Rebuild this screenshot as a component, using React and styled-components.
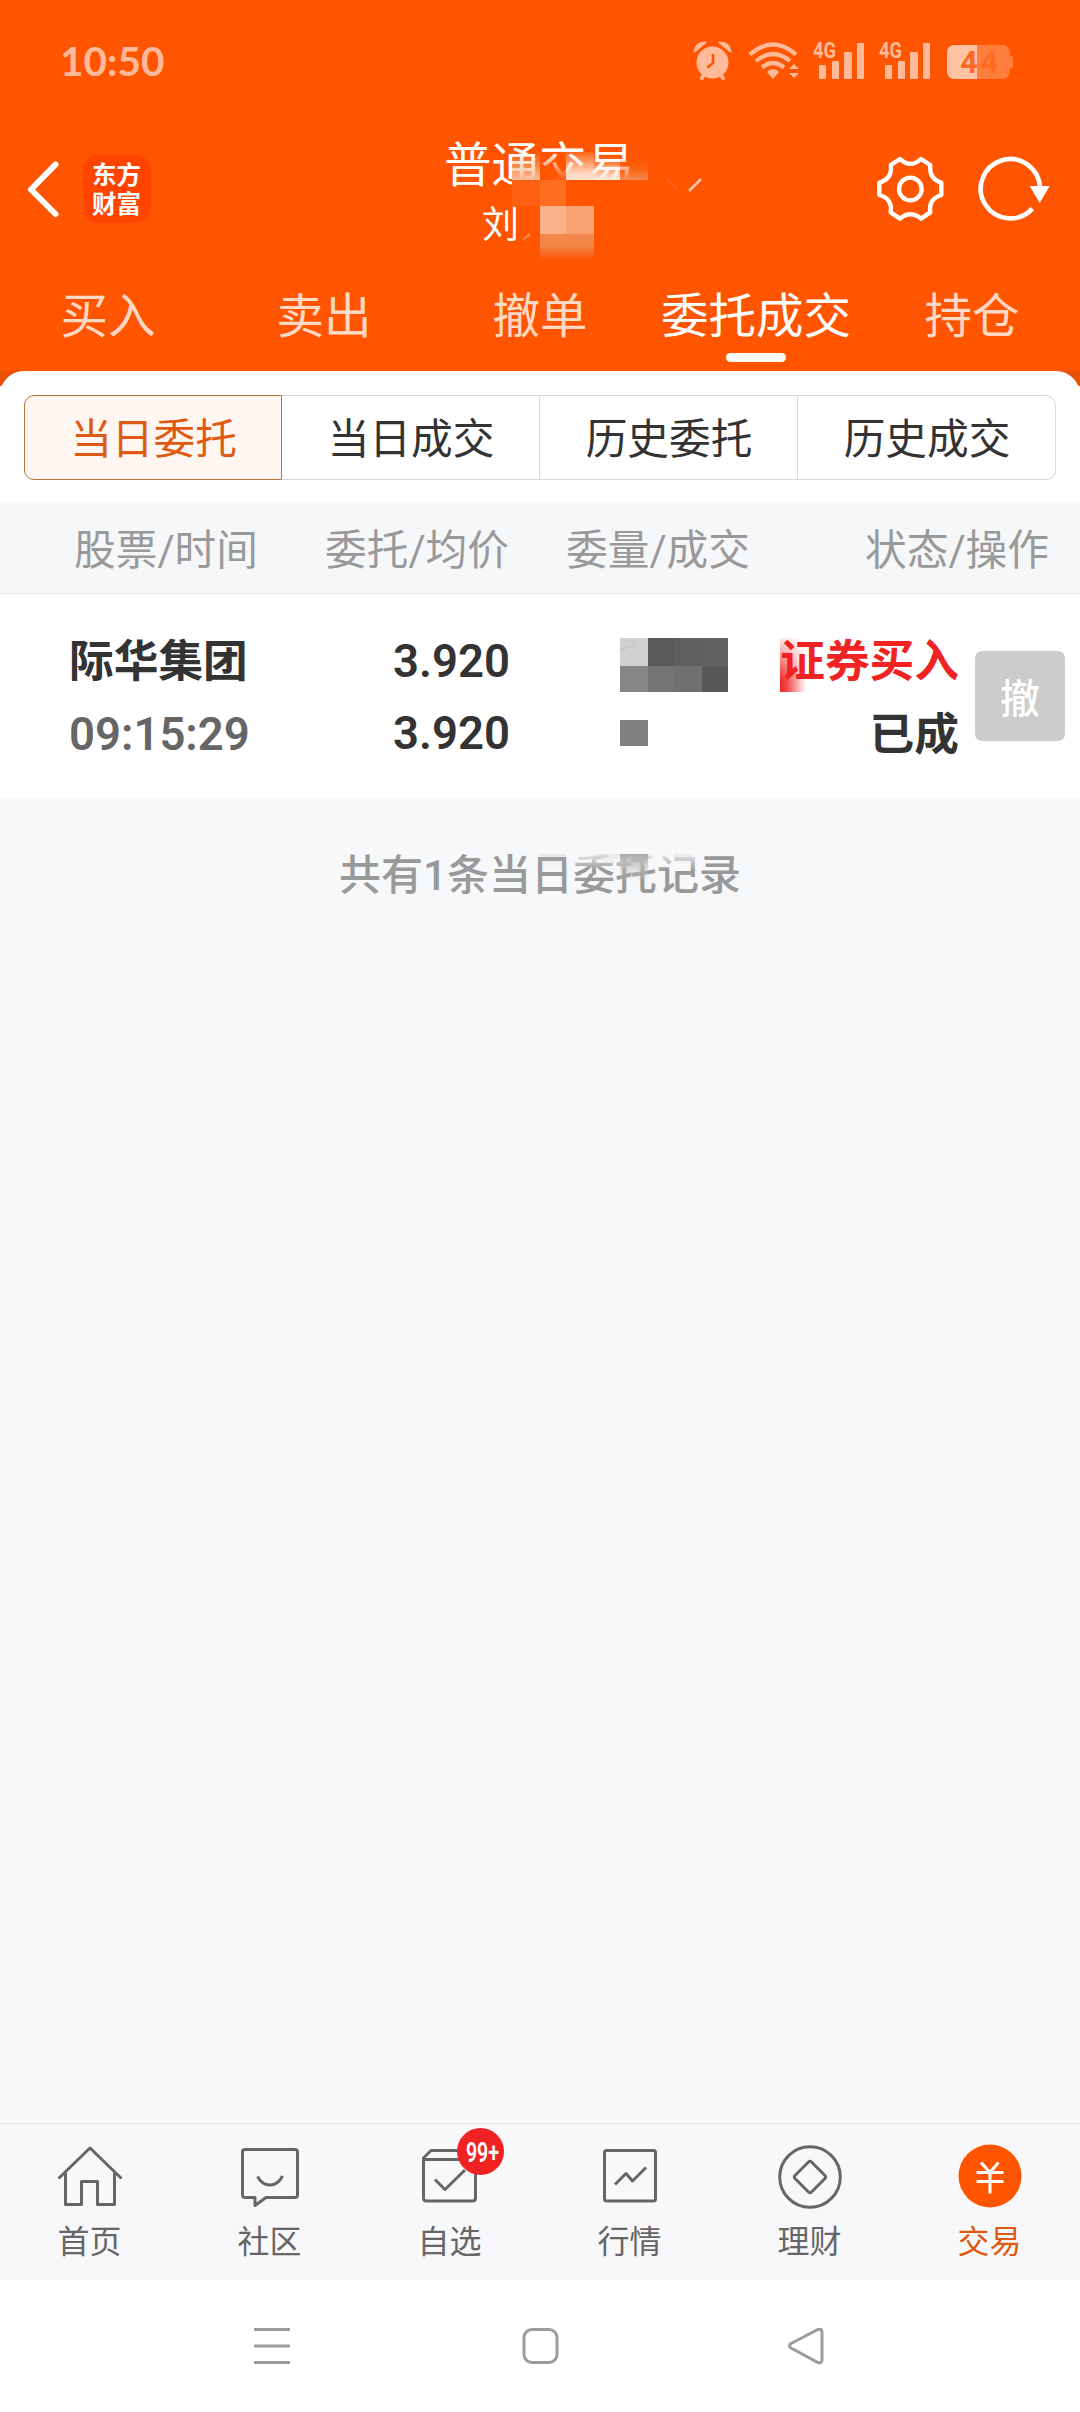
import React, { useState } from 'react';
import styled, { createGlobalStyle } from 'styled-components';

const GlobalStyle = createGlobalStyle`
  * {
    box-sizing: border-box;
  }
  body {
    margin: 0;
    font-family: Roboto, 'Noto Sans CJK SC', sans-serif;
    color: #333;
  }
  svg {
    display: block;
    flex: none;
  }
`;

const Page = styled.div`
  display: flex;
  flex-direction: column;
  width: 1080px;
  height: 2412px;
  background: #f7f8fa;
  overflow: hidden;
  white-space: nowrap;
`;

const Header = styled.header`
  height: 371px;
  background: #ff5500;
  color: #fff;
`;

const StatusBar = styled.div`
  display: flex;
  align-items: center;
  justify-content: space-between;
  height: 124px;
  padding: 0 66px 0 60px;
`;

const Clock = styled.span`
  margin-top: -2px;
  font-family: Lato, sans-serif;
  font-size: 40.5px;
  font-weight: 700;
  line-height: 50px;
  color: #ffbb99;
`;

const TitleBar = styled.div`
  display: flex;
  align-items: center;
  height: 130px;
  padding: 0 30px 0 26px;
`;

const AppLogo = styled.div`
  width: 68px;
  height: 68px;
  margin-left: 23px;
  padding: 6px 9px;
  border-radius: 15px;
  background: #ff4400;
  font-size: 24.5px;
  font-weight: 700;
  line-height: 29px;
`;

const TitleBlock = styled.div`
  position: relative;
  width: 270px;
  height: 130px;
  margin-left: 289px;
  padding-top: 7px;
`;

const Title = styled.div`
  padding-left: 4px;
  font-size: 47.5px;
  line-height: 70px;
`;

const Account = styled.div`
  padding-left: 42px;
  font-size: 37px;
  line-height: 50px;
`;

const Overlay = styled.svg`
  position: absolute;
  left: ${({ $x }) => $x}px;
  top: ${({ $y }) => $y}px;
`;

const Actions = styled.div`
  display: flex;
  align-items: center;
  gap: 34px;
  margin-left: auto;
`;

const MainTabs = styled.nav`
  display: grid;
  grid-template-columns: repeat(5, 216px);
  height: 117px;
`;

const MainTab = styled.div`
  display: flex;
  flex-direction: column;
  align-items: center;
  padding-top: 28px;
  font-size: 47.5px;
  line-height: 70px;
  color: ${({ $active }) => ($active ? '#fff' : '#ffd9c4')};
  &::after {
    content: '';
    width: 60px;
    height: 9px;
    margin-top: 1px;
    border-radius: 5px;
    background: ${({ $active }) => ($active ? '#fff' : 'transparent')};
  }
`;

const PanelWrap = styled.div`
  background: linear-gradient(#e95106 15px, #fff 15px);
`;

const Panel = styled.div`
  height: 131px;
  padding: 24px 24px 0;
  border-radius: 24px 24px 0 0;
  background: #fff;
`;

const Segments = styled.div`
  display: grid;
  grid-template-columns: repeat(4, 1fr);
  height: 85px;
`;

const Segment = styled.button`
  height: 85px;
  padding: 5px 0 0 1px;
  border: 1px solid ${({ $active }) => ($active ? '#b5743a' : '#d6d8d9')};
  border-left-width: ${({ $active }) => ($active ? 1 : 0)}px;
  background: ${({ $active }) => ($active ? '#fff6f2' : '#fff')};
  color: ${({ $active }) => ($active ? '#dd5a10' : '#333')};
  font: 400 41.7px/78px Roboto, 'Noto Sans CJK SC', sans-serif;
  &:first-child {
    border-radius: 10px 0 0 10px;
  }
  &:last-child {
    border-radius: 0 10px 10px 0;
  }
`;

const TableHead = styled.div`
  display: grid;
  grid-template-columns: 258px 251px 241px 1fr;
  height: 92px;
  padding-right: 31px;
  border-bottom: 1px solid #e6e8ea;
  background: #f6f7f9;
  color: #999;
  font-size: 41.7px;
  line-height: 97px;
  text-align: right;
`;

const OrderRow = styled.div`
  display: flex;
  height: 204px;
  padding: 32px 15px 0 69px;
  background: #fff;
  font-size: 44.7px;
  font-weight: 700;
  line-height: 73px;
`;

const Cell = styled.div`
  position: relative;
  width: ${({ $width }) => $width}px;
  text-align: ${({ $align }) => $align || 'left'};
`;

const Figures = styled.div`
  margin-top: -1px;
  font-size: 45.5px;
  font-weight: 600;
  color: ${({ $muted }) => ($muted ? '#666' : '#333')};
`;

const Side = styled.div`
  color: #f02222;
`;

const CancelButton = styled.button`
  width: 90px;
  height: 90px;
  margin: 25px 0 0 16px;
  padding: 0;
  border: 0;
  border-radius: 7px;
  background: #ccc;
  color: #fff;
  font: 500 40px/88px 'Noto Sans CJK SC', sans-serif;
`;

const Summary = styled.div`
  position: relative;
  flex: 1;
  padding-top: 47px;
  color: #999;
  font-size: 42px;
  font-weight: 500;
  line-height: 62px;
  text-align: center;
`;

const BottomBar = styled.nav`
  display: grid;
  grid-template-columns: repeat(6, 180px);
  height: 157px;
  border-top: 1px solid #e2e4e6;
  background: #f8f8fa;
`;

const BottomItem = styled.div`
  position: relative;
  display: flex;
  flex-direction: column;
  align-items: center;
  padding: 16px 1px 0 0;
  color: ${({ $active }) => ($active ? '#dd5a10' : '#666')};
  font-size: 32px;
  line-height: 46px;
  svg {
    margin-bottom: 9px;
  }
`;

const Badge = styled.div`
  position: absolute;
  left: 97px;
  top: 4px;
  width: 47px;
  height: 47px;
  border-radius: 50%;
  background: #f02222;
  color: #fff;
  text-align: center;
  font-size: 28px;
  font-weight: 600;
  line-height: 49px;
  span {
    display: block;
    margin: 0 -10px;
    transform: translateX(2px) scaleX(0.7);
  }
`;

const SystemNav = styled.div`
  display: flex;
  align-items: center;
  justify-content: space-between;
  height: 132px;
  padding: 0 255px 0 252px;
  background: #fff;
`;

const StatusIcons = () => (
  <svg width="322" height="46" viewBox="692 40 322 46" fill="#ffbb99">
    <g>
      <circle cx="712.5" cy="63.5" r="16" />
      <path
        d="M694.500 52.500Q696 43.500 705.500 43.500Z"
        stroke="#ffbb99"
        strokeLinejoin="round"
        strokeWidth="2"
      />
      <path
        d="M730.500 52.500Q729 43.500 719.500 43.500Z"
        stroke="#ffbb99"
        strokeLinejoin="round"
        strokeWidth="2"
      />
      <path d="M702 79l4-6M723 79l-4-6" stroke="#ffbb99" strokeWidth="4" strokeLinecap="round" />
      <path
        d="M713 56v8l-5 4"
        stroke="#ff5500"
        strokeWidth="2.6"
        fill="none"
        strokeLinecap="round"
        strokeLinejoin="round"
      />
    </g>
    <g fill="none" stroke="#ffbb99" strokeWidth="4.200">
      <path d="M750 55.500q23-20 46 0" />
      <path d="M756 62q17-14 34 0" />
      <path d="M762 68.500q11-9 22 0" />
    </g>
    <path d="M767 73q6-6 12 0l-6 7z" />
    <path d="M794 65l5 5h-10zM789 74h10l-5 5z" />
    {[0, 66].map((dx) => (
      <g key={dx} transform={`translate(${dx} 0)`}>
        <text
          x="813"
          y="59"
          fontFamily="Roboto"
          fontSize="22"
          fontWeight="700"
          textLength="23"
          lengthAdjust="spacingAndGlyphs"
        >
          4G
        </text>
        <rect x="819" y="66" width="7" height="14" rx="1" />
        <rect x="832" y="62" width="7" height="18" rx="1" />
        <rect x="844" y="53" width="8" height="27" rx="1" />
        <rect x="857" y="44" width="7" height="36" rx="1" />
      </g>
    ))}
    <rect x="947" y="46" width="63" height="34" rx="8" fill="#ff7e3d" />
    <rect x="1010" y="57" width="3" height="12" rx="1.5" fill="#ff7e3d" />
    <path d="M977 46h-22q-8 0-8 8v18q0 8 8 8h22z" fill="#ffc3a4" />
    <text
      x="960"
      y="74"
      fontFamily="Roboto"
      fontSize="31"
      fontWeight="700"
      fill="#ff6a22"
      textLength="38"
    >
      44
    </text>
  </svg>
);

const BackIcon = () => (
  <svg width="34" height="60" viewBox="0 0 34 60" fill="none" stroke="#fff" strokeWidth="6">
    <path d="M29.500 5.500L5 30.500 29.500 55" strokeLinecap="round" strokeLinejoin="round" />
  </svg>
);

const GearIcon = () => (
  <svg width="68" height="66" viewBox="108 78 204 198" fill="none" stroke="#fff" strokeWidth="13">
    <path
      d="M180 87Q211 116 243 87L271 105Q266 146 304 158L304 195Q264 208 271 247L243 266Q211 240 180 266L152 247Q158 206 118 195L118 158Q158 146 152 105Z"
      strokeLinejoin="round"
    />
    <circle cx="211" cy="177" r="34" />
  </svg>
);

const RefreshIcon = () => (
  <svg width="72" height="66" viewBox="416 78 216 198">
    <path d="M602 172A89 89 0 1 0 579 236" fill="none" stroke="#fff" strokeWidth="14" />
    <path d="M571 168H631L601 219Z" fill="#fff" />
  </svg>
);

// Hides the account name next to the title
const TitleMask = () => (
  <Overlay $x={0} $y={-4} width="272" height="150" viewBox="440 120 272 150">
    <defs>
      <linearGradient id="fadeIn" x1="0" y1="0" x2="0" y2="1">
        <stop offset="0" stopColor="#f9bd9a" stopOpacity="0" />
        <stop offset="1" stopColor="#f9bd9a" />
      </linearGradient>
      <linearGradient id="fadeLight" x1="0" y1="0" x2="0" y2="1">
        <stop offset="0" stopColor="#ffe6d8" stopOpacity="0.1" />
        <stop offset="0.8" stopColor="#fddcc8" />
      </linearGradient>
      <linearGradient id="fadeBright" x1="0" y1="0" x2="0" y2="1">
        <stop offset="0" stopColor="#feece2" stopOpacity="0" />
        <stop offset="1" stopColor="#feece2" />
      </linearGradient>
      <linearGradient id="fadeOut" x1="0" y1="0" x2="0" y2="1">
        <stop offset="0" stopColor="#f48a50" />
        <stop offset="0.5" stopColor="#f58246" />
        <stop offset="1" stopColor="#ff5500" />
      </linearGradient>
      <linearGradient id="fadeRight" x1="0" y1="0" x2="0" y2="1">
        <stop offset="0" stopColor="#ff5500" stopOpacity="0" />
        <stop offset="1" stopColor="#f58a52" />
      </linearGradient>
      <linearGradient id="fadeBack" x1="0" y1="0" x2="0" y2="1">
        <stop offset="0" stopColor="#ff5500" stopOpacity="0" />
        <stop offset="1" stopColor="#ff5500" />
      </linearGradient>
    </defs>
    <rect x="512" y="180" width="140" height="26" fill="#ff5500" />
    <rect x="516" y="206" width="130" height="58" fill="#ff5500" />
    <rect x="512" y="152" width="28" height="28" fill="url(#fadeIn)" />
    <rect x="540" y="150" width="26" height="31" fill="url(#fadeBack)" />
    <rect x="566" y="152" width="28" height="28" fill="url(#fadeLight)" />
    <rect x="594" y="156" width="26" height="24" fill="url(#fadeBright)" />
    <rect x="620" y="156" width="28" height="24" fill="url(#fadeRight)" />
    <rect x="512" y="180" width="28" height="26" fill="#ff5f10" />
    <rect x="540" y="180" width="26" height="26" fill="#ff6c22" />
    <rect x="540" y="206" width="26" height="28" fill="#f8b189" />
    <rect x="566" y="206" width="28" height="28" fill="#faa172" />
    <rect x="540" y="234" width="54" height="26" fill="url(#fadeOut)" />
    <path d="M701 179l-12 12" stroke="#ffc9ad" strokeWidth="2.500" />
    <path d="M666 178l12 12" stroke="#ff6428" strokeWidth="1.500" />
    <path d="M523 240l7-6" stroke="#ff8a52" strokeWidth="2" />
  </Overlay>
);

const volumeBlocks = [
  [0, 0, 28, '#d0d0d0'],
  [28, 0, 26, '#595959'],
  [54, 0, 28, '#5f5f5f'],
  [82, 0, 26, '#616161'],
  [0, 28, 28, '#868686'],
  [28, 28, 26, '#757575'],
  [54, 28, 28, '#707070'],
  [82, 28, 26, '#585858'],
];

const VolumeMask = () => (
  <Overlay $x={0} $y={12} width="108" height="109" viewBox="0 0 108 109">
    {volumeBlocks.map(([x, y, w, fill]) => (
      <rect key={`${x}-${y}`} x={x} y={y} width={w} height={y ? 26 : 28} fill={fill} />
    ))}
    <path d="M0 12l14-5" stroke="#bbb" />
    <rect y="82" width="28" height="26" fill="#808080" />
  </Overlay>
);

const SideMask = () => (
  <Overlay $x={52} $y={12} width="28" height="54">
    <defs>
      <linearGradient id="redFade">
        <stop offset="0" stopColor="#f02222" />
        <stop offset="0.3" stopColor="#f02222" stopOpacity="0.8" />
        <stop offset="1" stopColor="#f02222" stopOpacity="0" />
      </linearGradient>
      <linearGradient id="redDown" x1="0" y1="0" x2="0" y2="1">
        <stop offset="0" stopColor="#fff" stopOpacity="0.1" />
        <stop offset="0.8" stopColor="#fff" />
      </linearGradient>
      <mask id="redMask">
        <rect width="28" height="54" fill="url(#redDown)" />
      </mask>
    </defs>
    <rect width="26" height="54" fill="url(#redFade)" mask="url(#redMask)" />
  </Overlay>
);

const SummaryMask = () => (
  <Overlay $x={540} $y={52} width="156" height="34" viewBox="540 850 156 34">
    <defs>
      <linearGradient id="greyFade" x1="0" y1="0" x2="0" y2="1">
        <stop offset="0" stopColor="#aaa" />
        <stop offset="1" stopColor="#ccc" stopOpacity="0.1" />
      </linearGradient>
      <linearGradient id="paleFade" x1="0" y1="0" x2="0" y2="1">
        <stop offset="0.2" stopColor="#f7f8fa" stopOpacity="0.85" />
        <stop offset="1" stopColor="#f7f8fa" stopOpacity="0" />
      </linearGradient>
    </defs>
    <rect x="566" y="850" width="130" height="20" fill="url(#paleFade)" />
    <rect x="620" y="854" width="28" height="26" fill="url(#greyFade)" />
    <rect x="540" y="854" width="26" height="16" fill="url(#greyFade)" opacity="0.25" />
    <rect x="594" y="854" width="26" height="12" fill="url(#greyFade)" opacity="0.2" />
    <rect x="674" y="854" width="18" height="10" fill="url(#greyFade)" opacity="0.2" />
  </Overlay>
);

const iconPaths = {
  home: (
    <>
      <path d="M3.500 38.500L35 8 66.500 38.500" />
      <path d="M10.500 33V64.500H26.500V41.500H42.500V64.500H59.500V33" />
    </>
  ),
  community: (
    <>
      <path d="M10 9.500H60Q62.500 9.500 62.500 12V55Q62.500 57.500 60 57.500H31L20 65.500V57.500H10Q7.500 57.500 7.500 55V12Q7.500 9.500 10 9.500Z" />
      <path d="M22.500 36.500Q27 45 35 45T47.500 36" />
    </>
  ),
  watchlist: (
    <>
      <path d="M8.500 19.500H60.500V58Q60.500 61 57.500 61H11.500Q8.500 61 8.500 58V18L16 10.500H55L60.500 18" />
      <path d="M20 39.500L30 49.500 50 30" />
    </>
  ),
  market: (
    <>
      <rect x="9.500" y="10.500" width="51" height="50.500" rx="2" />
      <path d="M20 44.500L31 33.500 37.500 41 51 27.500" />
    </>
  ),
  wealth: (
    <>
      <circle cx="35" cy="37" r="30.300" />
      <path d="M33.500 22L20 35.500Q18.800 37 20 38.500L33.500 52Q35 53.500 36.500 52L50 38.500Q51.200 37 50 35.500L36.500 22Q35 20.500 33.500 22Z" />
    </>
  ),
  trade: (
    <>
      <circle cx="35" cy="36" r="31.500" fill="#ff5500" stroke="none" />
      <path
        d="M26 22.500L35 32.500 43.500 22.500M35 32V53.500M21.500 32.500H48.500M21.500 41.500H48.500"
        stroke="#fff"
      />
    </>
  ),
};

const bottomItems = [
  { icon: 'home', label: '首页' },
  { icon: 'community', label: '社区' },
  { icon: 'watchlist', label: '自选', badge: '99+' },
  { icon: 'market', label: '行情' },
  { icon: 'wealth', label: '理财' },
  { icon: 'trade', label: '交易' },
];

const mainTabs = ['买入', '卖出', '撤单', '委托成交', '持仓'];
const segments = ['当日委托', '当日成交', '历史委托', '历史成交'];
const heads = ['股票/时间', '委托/均价', '委量/成交', '状态/操作'];

const App = () => {
  const [tab, setTab] = useState('委托成交');
  const [segment, setSegment] = useState('当日委托');

  return (
    <Page>
      <GlobalStyle />
      <Header>
        <StatusBar>
          <Clock>10:50</Clock>
          <StatusIcons />
        </StatusBar>
        <TitleBar>
          <BackIcon />
          <AppLogo>
            东方
            <br />
            财富
          </AppLogo>
          <TitleBlock>
            <Title>普通交易</Title>
            <Account>刘</Account>
            <TitleMask />
          </TitleBlock>
          <Actions>
            <GearIcon />
            <RefreshIcon />
          </Actions>
        </TitleBar>
        <MainTabs>
          {mainTabs.map((name) => (
            <MainTab key={name} $active={name === tab} onClick={() => setTab(name)}>
              {name}
            </MainTab>
          ))}
        </MainTabs>
      </Header>
      <PanelWrap>
        <Panel>
          <Segments>
            {segments.map((name) => (
              <Segment key={name} $active={name === segment} onClick={() => setSegment(name)}>
                {name}
              </Segment>
            ))}
          </Segments>
        </Panel>
      </PanelWrap>
      <TableHead>
        {heads.map((name) => (
          <span key={name}>{name}</span>
        ))}
      </TableHead>
      <OrderRow>
        <Cell $width={240}>
          <div>际华集团</div>
          <Figures $muted>09:15:29</Figures>
        </Cell>
        <Cell $width={201} $align="right">
          <Figures>3.920</Figures>
          <Figures>3.920</Figures>
        </Cell>
        <Cell $width={110} />
        <Cell $width={108}>
          <VolumeMask />
        </Cell>
        <Cell $width={231} $align="right">
          <Side>证券买入</Side>
          <div>已成</div>
          <SideMask />
        </Cell>
        <CancelButton>撤</CancelButton>
      </OrderRow>
      <Summary>
        共有1条当日委托记录
        <SummaryMask />
      </Summary>
      <BottomBar>
        {bottomItems.map(({ icon, label, badge }) => (
          <BottomItem key={label} $active={icon === 'trade'}>
            <svg
              width="70"
              height="70"
              viewBox="0 0 70 70"
              fill="none"
              stroke="#666"
              strokeWidth="3"
              strokeLinejoin="round"
            >
              {iconPaths[icon]}
            </svg>
            {label}
            {badge && (
              <Badge>
                <span>{badge}</span>
              </Badge>
            )}
          </BottomItem>
        ))}
      </BottomBar>
      <SystemNav>
        <svg width="40" height="40" stroke="#9c9c9c" strokeWidth="3">
          <path d="M2 3.500H38M2 20H38M2 36.500H38" />
        </svg>
        <svg width="40" height="40" fill="none" stroke="#9c9c9c" strokeWidth="3">
          <rect x="5" y="3.500" width="33" height="33" rx="8" />
        </svg>
        <svg width="40" height="40" fill="none" stroke="#9c9c9c" strokeWidth="3">
          <path d="M6 17.500L33 3.500Q37 2.500 37 6V34Q37 37.500 33 36.500L6 22Q3 20 6 17.500Z" />
        </svg>
      </SystemNav>
    </Page>
  );
};

export default App;
